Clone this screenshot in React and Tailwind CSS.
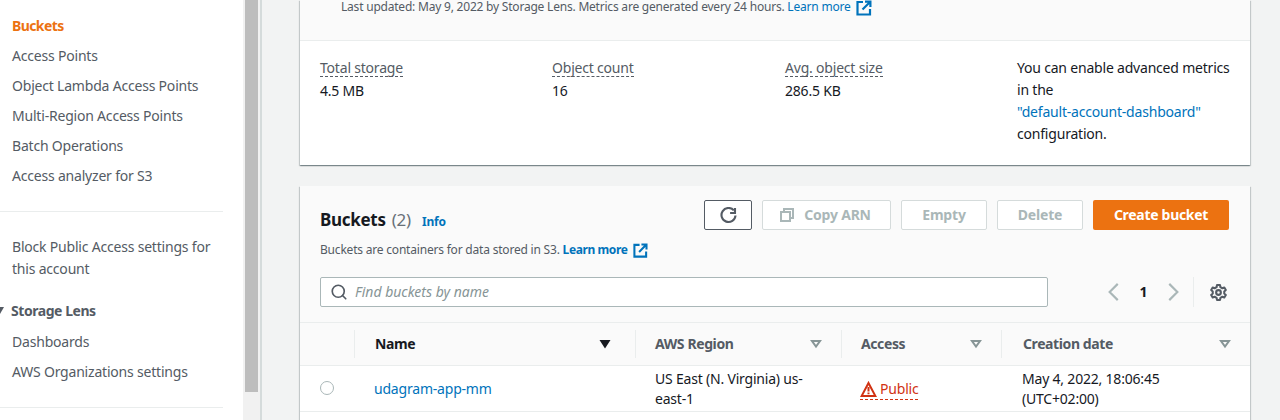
import React from 'react';
import { Search } from 'lucide-react';

const navTop = ['Access Points', 'Object Lambda Access Points', 'Multi-Region Access Points', 'Batch Operations', 'Access analyzer for S3'];

const ExternalIcon = ({ className }) => (
  <svg viewBox="0 0 16 16" className={className} fill="none" stroke="#0073bb" strokeWidth="2.2">
    <path d="M7 2H1.5v12.5H14V9" />
    <path d="M6.5 9.5 13.5 2.5M9 1.6h5.4V7" />
  </svg>
);

const RefreshIcon = () => (
  <svg viewBox="0 0 16 16" className="w-[17px] h-[17px]" fill="none" stroke="#545b64" strokeWidth="2">
    <path d="M13 3.2A6.6 6.6 0 1 0 14.6 8" />
    <path d="M9.5 5.6h4.6V1" />
  </svg>
);

const CopyIcon = () => (
  <svg viewBox="0 0 16 16" className="w-4 h-4" fill="none" stroke="#aab7b8" strokeWidth="2">
    <path d="M5 5V2h9v9h-3" />
    <rect x="2" y="5" width="9" height="9" />
  </svg>
);

const GearIcon = () => (
  <svg viewBox="0 0 16 16" className="w-[17px] h-[17px]" fill="none" stroke="#545b64">
    <circle cx="8" cy="8" r="2.2" strokeWidth="2" />
    <path d="M6.6 1h2.8l.4 2 1.8 1 1.9-.7 1.4 2.4-1.5 1.4v1.8l1.5 1.4-1.4 2.4-1.9-.7-1.8 1-.4 2H6.6l-.4-2-1.8-1-1.9.7L1.1 10.3l1.5-1.4V7.1L1.1 5.7l1.4-2.4 1.9.7 1.8-1z" strokeWidth="1.9" strokeLinejoin="round" />
  </svg>
);

const WarningIcon = () => (
  <svg viewBox="0 0 17 16" className="w-[17px] h-[16px] shrink-0" fill="none" stroke="#d13212" strokeWidth="2">
    <path d="M8.5 2 1.6 15h13.8z" />
    <path d="M8.5 6v4.6M8.5 11.4v1.8" strokeWidth="2" />
  </svg>
);

const Chevron = ({ d }) => (
  <svg viewBox="0 0 16 16" className="w-5 h-5" fill="none" stroke="#aab7b8" strokeWidth="1.7"><path d={d} /></svg>
);

const SortIcon = ({ active }) => (
  active ? (
    <svg viewBox="0 0 12 10" className="w-3 h-[10px]"><path d="M0.5 1h11L6 9.5z" fill="#16191f" /></svg>
  ) : (
    <svg viewBox="0 0 12 10" className="w-3 h-[10px]" fill="none" stroke="#879596" strokeWidth="2"><path d="M2 2h8L6 7.5z" /></svg>
  )
);

const Metric = ({ label, value, className }) => (
  <div className={className}>
    <div className="leading-[22px] text-[#545b64]"><span className="border-b border-dashed border-[#545b64] inline-block leading-[17px]">{label}</span></div>
    <div className="leading-[22px] mt-[1px] text-[#16191f]">{value}</div>
  </div>
);

const Th = ({ className, children, active, dark }) => (
  <div className={`flex items-center h-[28px] border-l border-[#eaeded] font-bold tracking-[-0.4px] ${dark ? 'text-[#16191f]' : 'text-[#545b64]'} ${className}`}>
    <span className="flex-1 pb-[1px]">{children}</span>
    <SortIcon active={active} />
  </div>
);

export default function App() {
  return (
    <div className="flex h-[420px] overflow-hidden bg-[#f2f3f3] text-[14px] font-['Noto_Sans','Liberation_Sans',sans-serif] tracking-[-0.2px]">
      <aside className="w-[243px] shrink-0 bg-white text-[#545b64]">
        <div className="pl-3 pt-[15px] leading-[22px]">
          <div className="h-[30px] font-bold text-[#ec7211] tracking-[-0.6px]">Buckets</div>
          {navTop.map((item) => (
            <div key={item} className="h-[30px]">{item}</div>
          ))}
        </div>
        <div className="w-[223px] border-t border-[#eaeded] mt-[16px]" />
        <div className="pl-3 pt-[24px] leading-[22px]">Block Public Access settings for<br />this account</div>
        <div className="flex items-center mt-[19px] h-[22px] font-bold tracking-[-0.45px]">
          <svg viewBox="0 0 8 8" className="w-[8px] h-[8px] shrink-0 -ml-[4px] mr-[7px]"><path d="M0 1h8L4 8z" fill="#545b64" /></svg>
          Storage Lens
        </div>
        <div className="pl-3 mt-[10px] leading-[22px]">
          <div className="h-[30px]">Dashboards</div>
          <div className="h-[30px]">AWS Organizations settings</div>
        </div>
        <div className="w-[223px] border-t border-[#eaeded] mt-[16px]" />
      </aside>

      <div className="w-[17px] shrink-0 bg-[#f1f1f1] pl-[2px]">
        <div className="h-[392px] w-[13px] bg-[#bdbdbd]" />
      </div>

      <main className="flex-1 min-w-0 border-l-2 border-[#d5dbdb] pl-[38px] pr-[30px]">
        <section className="bg-white shadow-[0_1px_1px_0_rgba(0,28,36,0.3),1px_1px_1px_0_rgba(0,28,36,0.15),-1px_1px_1px_0_rgba(0,28,36,0.15)]">
          <div className="h-[41px] bg-[#fafafa] border-b border-[#eaeded] pl-[41px] text-[#545b64] text-[12px] tracking-[-0.21px] flex items-start gap-[5px]">
            <span className="leading-[13px] pb-[2px] whitespace-nowrap">Last updated: May 9, 2022 by Storage Lens. Metrics are generated every 24 hours. <span className="text-[#0073bb]">Learn more</span></span>
            <ExternalIcon className="w-[16px] h-[16px]" />
          </div>
          <div className="flex h-[124px] pl-[20px] pt-[16px]">
            <Metric label="Total storage" value="4.5 MB" className="w-[232px]" />
            <Metric label="Object count" value="16" className="w-[233px]" />
            <Metric label="Avg. object size" value="286.5 KB" className="w-[232px]" />
            <div className="leading-[22px] text-[#16191f] w-[220px]">
              You can enable advanced metrics<br />in the<br /><span className="text-[#0073bb]">"default-account-dashboard"</span><br />configuration.
            </div>
          </div>
        </section>

        <section className="mt-[21px] bg-white shadow-[0_1px_1px_0_rgba(0,28,36,0.3),1px_1px_1px_0_rgba(0,28,36,0.15),-1px_1px_1px_0_rgba(0,28,36,0.15)]">
          <div className="bg-[#fafafa] h-[137px] border-b border-[#eaeded] pl-[20px] pr-[21px] pt-[14px]">
            <div className="flex justify-between">
              <div>
                <div className="flex items-baseline mt-[9px]">
                  <span className="font-bold text-[17px] tracking-[-0.3px] leading-[22px] text-[#16191f]">Buckets</span>
                  <span className="text-[17px] leading-[22px] text-[#687078] ml-[6px]">(2)</span>
                  <span className="font-bold text-[12px] text-[#0073bb] ml-[11px]">Info</span>
                </div>
                <div className="flex items-center mt-[9px] text-[12px] tracking-[-0.2px] text-[#545b64] leading-[20px]">
                  Buckets are containers for data stored in S3.&nbsp;<span className="font-bold tracking-[-0.4px] text-[#0073bb]">Learn more</span>
                  <ExternalIcon className="w-[15px] h-[15px] ml-[6px]" />
                </div>
              </div>
              <div className="flex gap-[10px] h-[30px] font-bold">
                <button className="w-[48px] flex items-center justify-center border border-[#545b64] rounded-[2px] bg-white"><RefreshIcon /></button>
                <button className="w-[129px] flex items-center justify-center gap-[9px] pr-[3px] pb-[1px] border border-[#d5dbdb] rounded-[2px] bg-white text-[#aab7b8]"><CopyIcon />Copy ARN</button>
                <button className="w-[86px] pb-[1px] border border-[#d5dbdb] rounded-[2px] bg-white text-[#aab7b8]">Empty</button>
                <button className="w-[86px] pb-[1px] border border-[#d5dbdb] rounded-[2px] bg-white text-[#aab7b8]">Delete</button>
                <button className="w-[136px] pb-[1px] rounded-[2px] bg-[#ec7211] text-white tracking-[-0.3px]">Create bucket</button>
              </div>
            </div>
            <div className="flex items-center mt-[17px]">
              <div className="w-[728px] h-[30px] flex items-center border border-[#aab7b8] rounded-[2px] bg-white pl-[9px]">
                <Search className="w-[18px] h-[18px] text-[#545b64] mr-[7px]" strokeWidth={2.2} />
                <span className="italic text-[#879596] tracking-normal pb-[2px]">Find buckets by name</span>
              </div>
              <div className="flex items-center ml-[56px] pb-[1px]">
                <Chevron d="M11 1.5 4.5 8l6.5 6.5" />
                <span className="w-[39px] text-center font-bold text-[#16191f]">1</span>
                <Chevron d="M5 1.5 11.5 8 5 14.5" />
              </div>
              <div className="h-[30px] border-l border-[#eaeded] ml-[10px] pl-[16px] flex items-center"><GearIcon /></div>
            </div>
          </div>

          <div className="flex items-center h-[43px] bg-[#fafafa] border-b border-[#eaeded]">
            <div className="w-[54px] shrink-0" />
            <Th className="w-[281px] pl-[20px] pr-[24px]" active dark>Name</Th>
            <Th className="w-[206px] pl-[19px] pr-[19px]">AWS Region</Th>
            <Th className="w-[160px] pl-[19px] pr-[19px]">Access</Th>
            <Th className="flex-1 pl-[21px] pr-[19px]">Creation date</Th>
          </div>

          <div className="flex items-center h-[46px] bg-white border-b border-[#eaeded] text-[#16191f] leading-[20px]">
            <div className="w-[54px] shrink-0 pl-[20px] pb-[2px]">
              <div className="w-[14px] h-[14px] rounded-full border-[1.5px] border-[#aab7b8]" />
            </div>
            <div className="w-[281px] pl-[20px] text-[#0073bb]">udagram-app-mm</div>
            <div className="w-[206px] pl-[20px] pr-[20px]">US East (N. Virginia) us-east-1</div>
            <div className="w-[160px] pl-[19px] pt-[4px]">
              <span className="inline-flex items-center gap-[3px] text-[#d13212] border-b border-dashed border-[#d13212] leading-[20px]"><WarningIcon />Public</span>
            </div>
            <div className="flex-1 pl-[21px]">May 4, 2022, 18:06:45<br />(UTC+02:00)</div>
          </div>

          <div className="flex bg-white h-[60px] pt-[6px] text-[#16191f] leading-[20px]">
            <div className="w-[562px] shrink-0" />
            <div className="w-[120px] text-[#545b64]">Objects can be public</div>
          </div>
        </section>
      </main>
    </div>
  );
}
